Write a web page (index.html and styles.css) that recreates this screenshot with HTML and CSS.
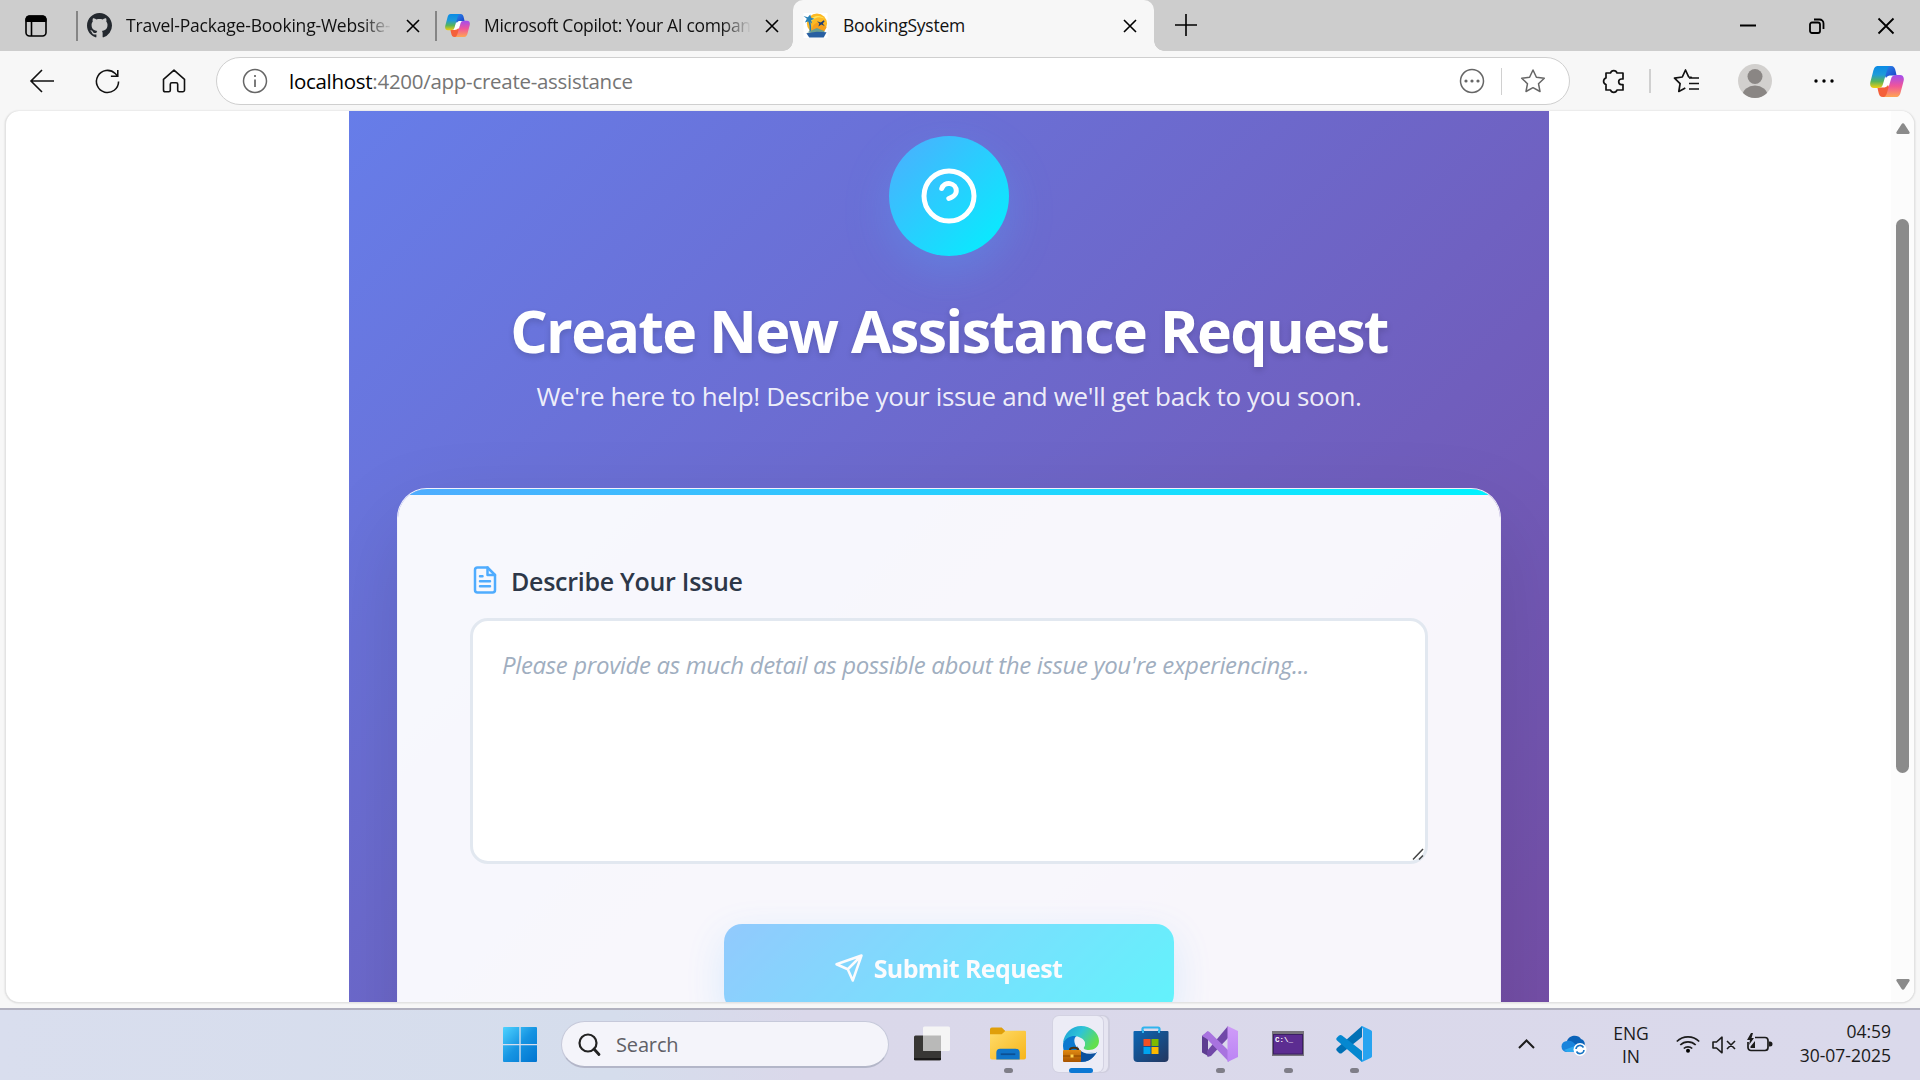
FILE: index.html
```
<!DOCTYPE html>
<html lang="en">
<head>
<meta charset="utf-8">
<title>BookingSystem</title>
<link rel="stylesheet" href="styles.css">
</head>
<body>
<svg class="defs" width="0" height="0" aria-hidden="true">
  <defs>
    <linearGradient id="cpBlue" x1="0" y1="0" x2="0" y2="1"><stop offset="0" stop-color="#0a8be6"/><stop offset=".4" stop-color="#1f9bd8"/><stop offset=".7" stop-color="#58b45a"/><stop offset="1" stop-color="#f5cf0c"/></linearGradient>
    <linearGradient id="cpPink" x1="0" y1="0" x2="0" y2="1"><stop offset="0" stop-color="#a14df0"/><stop offset=".5" stop-color="#f0559a"/><stop offset="1" stop-color="#ffa552"/></linearGradient>
    <linearGradient id="cpNavy" x1="0" y1="0" x2="1" y2="1"><stop offset="0" stop-color="#2a8aee"/><stop offset="1" stop-color="#1b3fc4"/></linearGradient>
    <linearGradient id="win" x1="0" y1="0" x2="1" y2="1"><stop offset="0" stop-color="#4fd3ff"/><stop offset=".5" stop-color="#1694e2"/><stop offset="1" stop-color="#0074d0"/></linearGradient>
    <linearGradient id="fold" x1="0" y1="0" x2="1" y2="1"><stop offset="0" stop-color="#ffdc6a"/><stop offset="1" stop-color="#f7b51a"/></linearGradient>
    <linearGradient id="edgeTop" x1="0" y1="0" x2="1" y2=".5"><stop offset="0" stop-color="#1a9bd8"/><stop offset=".5" stop-color="#2fc4d6"/><stop offset="1" stop-color="#62df4e"/></linearGradient>
    <linearGradient id="case" x1="0" y1="0" x2="0" y2="1"><stop offset="0" stop-color="#e08a12"/><stop offset="1" stop-color="#a85400"/></linearGradient>
    <linearGradient id="store" x1="0" y1="0" x2="1" y2="1"><stop offset="0" stop-color="#0b66b4"/><stop offset="1" stop-color="#24365f"/></linearGradient>
    <linearGradient id="vsr" x1="0" y1="0" x2="0" y2="1"><stop offset="0" stop-color="#cf9cf8"/><stop offset="1" stop-color="#bb84f4"/></linearGradient>
    <symbol id="copilot" viewBox="0 0 34 31">
      <path d="M15.500 9.500h7l-4 12h-7z" fill="#fff"/>
      <path d="M15 0h6c3 0 4 2 4.600 5l1 4.500H21c-2 0-4 .5-5 2.500l-2-4z" fill="url(#cpNavy)"/>
      <path d="M19 31h-6c-3 0-4-2-4.600-5l-1-4.500H13c2 0 4-.5 5-2.500l2 4z" fill="#f4603a"/>
      <path d="M8 0h12c-2 1-2.500 2.500-3.200 5L13 18c-.8 3-2.500 4-5.500 4H4c-3 0-4.500-2.500-3.600-6L3 6c1-4 2-6 5-6z" fill="url(#cpBlue)"/>
      <path d="M26 31H14c2-1 2.500-2.500 3.200-5L21 13c.8-3 2.500-4 5.500-4H30c3 0 4.500 2.500 3.600 6L31 25c-1 4-2 6-5 6z" fill="url(#cpPink)"/>
    </symbol>
    <symbol id="close" viewBox="0 0 14 14"><path d="M1 1l12 12M13 1L1 13" fill="none" stroke="#000" stroke-width="1.6"/></symbol>
  </defs>
</svg>

<header class="tabstrip">
  <svg class="tab-actions" viewBox="0 0 22 22"><rect x="1" y="1" width="20" height="20" rx="3.5" fill="none" stroke="#000" stroke-width="1.6"/><path d="M1 6.500V4a3 3 0 0 1 3-3h14a3 3 0 0 1 3 3v2.500z" stroke="#000"/><path d="M6.500 6v15" stroke="#000" stroke-width="1.600"/></svg>
  <span class="tab-divider first"></span>
  <div class="tab one">
    <svg class="fav" viewBox="0 0 16 16"><path fill="#24292f" d="M8 0C3.580 0 0 3.580 0 8c0 3.540 2.290 6.530 5.470 7.590.4.070.55-.17.55-.38 0-.19-.01-.82-.01-1.490-2.010.37-2.530-.49-2.690-.94-.09-.23-.48-.94-.82-1.130-.28-.15-.68-.52-.01-.53.63-.01 1.080.58 1.230.82.72 1.210 1.870.87 2.330.66.07-.52.28-.87.51-1.070-1.780-.2-3.640-.89-3.640-3.950 0-.87.31-1.590.82-2.150-.08-.2-.36-1.020.08-2.120 0 0 .67-.21 2.200.82.64-.18 1.320-.27 2-.27s1.360.09 2 .27c1.530-1.040 2.200-.82 2.200-.82.44 1.100.16 1.920.08 2.120.51.56.82 1.270.82 2.150 0 3.070-1.870 3.750-3.650 3.950.29.25.54.73.54 1.480 0 1.070-.01 1.930-.01 2.200 0 .21.15.46.55.38A8.010 8.010 0 0 0 16 8c0-4.420-3.580-8-8-8z"/></svg>
    <span class="tab-title fade">Travel-Package-Booking-Website-</span>
    <svg class="x"><use href="#close"/></svg>
  </div>
  <span class="tab-divider"></span>
  <div class="tab two">
    <svg class="fav"><use href="#copilot"/></svg>
    <span class="tab-title fade">Microsoft Copilot: Your AI compan</span>
    <svg class="x"><use href="#close"/></svg>
  </div>
  <div class="tab active">
    <svg class="fav" viewBox="0 0 25 26"><rect width="25" height="26" fill="#fff"/><circle cx="14" cy="11" r="10.500" fill="#fdb924"/><path d="M7 7c4-5 11-5 15-1-5-3-10-2-14 3z" fill="#ffe65c"/><path d="M8 19c1-7 6-11 12-9l4 5-3 5z" fill="#f6a01c"/><path d="M5.500 8c2 4 2 7 1.500 12" stroke="#2a78b0" stroke-width="1.600" fill="none"/><path d="M0 3l4.500 1.500L7 1.500 8 5l3.500 1-3.500 1.500 1 3.500-3.500-2.500L1.500 10l2-4z" fill="#2a82b8"/><path d="M14 8.500l4 1.500 3-2.500 1 1-2 2.500 2 2.500-3.500-1.500-3 2 1-3z" fill="#1c3f78"/><path d="M4 20l10-4.500L22 19l-2 4z" fill="#6a9d8f"/><path d="M3 21l11-1.500 10 .5-3 5.500H6z" fill="#285fa2"/></svg>
    <span class="tab-title">BookingSystem</span>
    <svg class="x"><use href="#close"/></svg>
  </div>
  <svg class="plus" viewBox="0 0 22 22"><path d="M11 0v22M0 11h22" stroke="#000" stroke-width="1.600"/></svg>
  <div class="window-controls">
    <svg viewBox="0 0 16 16"><path d="M0 7.500h16" stroke="#000" stroke-width="2"/></svg>
    <svg viewBox="0 0 16 16"><rect x="1" y="4.500" width="10" height="10.500" rx="2" fill="none" stroke="#000" stroke-width="1.800"/><path d="M5 1.500h5.500a4 4 0 0 1 4 4V11" fill="none" stroke="#000" stroke-width="1.800"/></svg>
    <svg viewBox="0 0 16 16"><path d="M.5.5l15 15M15.500.5l-15 15" stroke="#000" stroke-width="1.800"/></svg>
  </div>
</header>

<nav class="toolbar">
  <svg class="back" viewBox="0 0 24 24"><path d="M24 12H1M12 1L1 12l11 11" fill="none" stroke="#111" stroke-width="1.600"/></svg>
  <svg class="reload" viewBox="0 0 26 26"><path d="M24.500 13A11.500 11.500 0 1 1 21 4.700l2.500 2.500M23.700 1v6.500H16.500" fill="none" stroke="#111" stroke-width="1.600"/></svg>
  <svg class="home" viewBox="0 0 24 24"><path d="M1.500 10.300L12 1.200l10.500 9.100V21a1.800 1.800 0 0 1-1.800 1.800h-3.500a1.500 1.500 0 0 1-1.500-1.500v-6a1.500 1.500 0 0 0-1.500-1.500h-4.400a1.500 1.500 0 0 0-1.500 1.500v6a1.500 1.500 0 0 1-1.500 1.500H3.300A1.800 1.800 0 0 1 1.500 21z" fill="none" stroke="#111" stroke-width="1.600" stroke-linejoin="round"/></svg>
  <div class="address">
    <svg class="info" viewBox="0 0 26 26"><circle cx="13" cy="13" r="11.500" fill="none" stroke="#666" stroke-width="1.500"/><path d="M13 11.500V19M13 7v2" stroke="#666" stroke-width="1.700"/></svg>
    <span class="url"><b>localhost</b>:4200/app-create-assistance</span>
    <svg class="more" viewBox="0 0 26 26"><circle cx="13" cy="13" r="11.500" fill="none" stroke="#666" stroke-width="1.500"/><g fill="#666"><circle cx="7" cy="13" r="1.600"/><circle cx="13" cy="13" r="1.600"/><circle cx="19" cy="13" r="1.600"/></g></svg>
    <span class="bar-divider"></span>
    <svg class="star" viewBox="0 0 26 26"><path d="M13 2l3.400 7.200 7.900 1-5.800 5.500 1.500 7.800-7-3.800-7 3.800 1.500-7.800L1.700 10.200l7.900-1z" fill="none" stroke="#666" stroke-width="1.500" stroke-linejoin="round"/></svg>
  </div>
  <svg class="puzzle" viewBox="0 0 24 26"><path d="M5 5h4.500a3.400 3.400 0 0 1 6.500 0H22v6h-1.500a2.800 2.800 0 0 0 0 5.600H22V22h-6a3.400 3.400 0 0 1-6.500 0H5v-5.500a3.400 3.400 0 0 1 0-6.500z" fill="none" stroke="#111" stroke-width="1.700" stroke-linejoin="round"/></svg>
  <span class="bar-divider outer"></span>
  <svg class="favorites" viewBox="0 0 26 26"><path d="M19 9.500l-3.300-.5L12.500 2 9.300 9l-7.800 1.200 5.600 5.400L5.800 23.500l6.500-3.500M16 10h10M16 15.500h10M16 21h10" fill="none" stroke="#111" stroke-width="1.700" stroke-linejoin="round"/></svg>
  <svg class="avatar" viewBox="0 0 34 34"><clipPath id="av"><circle cx="17" cy="17" r="17"/></clipPath><g clip-path="url(#av)"><rect width="34" height="34" fill="#d2d0ce"/><circle cx="17" cy="12.500" r="7.500" fill="#8a8684"/><ellipse cx="17" cy="31.500" rx="12.500" ry="10" fill="#8a8684"/></g></svg>
  <svg class="dots" viewBox="0 0 22 6"><circle cx="3" cy="3" r="1.700"/><circle cx="11" cy="3" r="1.700"/><circle cx="19" cy="3" r="1.700"/></svg>
  <svg class="copilot-btn"><use href="#copilot"/></svg>
</nav>

<div class="frame">
  <main class="viewport">
    <section class="page">
      <div class="badge"><svg viewBox="0 0 24 24"><circle cx="12" cy="12" r="10"/><path d="M9.090 9a3 3 0 0 1 5.830 1c0 2-3 3-3 3"/></svg></div>
      <h1>Create New Assistance Request</h1>
      <p class="sub">We're here to help! Describe your issue and we'll get back to you soon.</p>
      <form class="card">
        <div class="card-bar"></div>
        <label class="label" for="issue">
          <svg viewBox="0 0 24 24"><path d="M14 2H6a2 2 0 0 0-2 2v16a2 2 0 0 0 2 2h12a2 2 0 0 0 2-2V8z"/><path d="M14 2v6h6M16 13H8M16 17H8M10 9H8"/></svg>
          <span>Describe Your Issue</span>
        </label>
        <div class="field">
          <textarea id="issue" placeholder="Please provide as much detail as possible about the issue you're experiencing..."></textarea>
          <svg class="grip" viewBox="0 0 12 12"><path d="M1 11.500L11 1M7 11.500l4-4" stroke="#444" stroke-width="1.500"/></svg>
        </div>
        <button class="submit" type="button">
          <svg viewBox="0 0 24 24"><path d="M22 2L11 13M22 2l-7 20-4-9-9-4z"/></svg>
          <span>Submit Request</span>
        </button>
      </form>
    </section>
    <aside class="scroll">
      <svg class="arrow" viewBox="0 0 14 11"><path d="M5.500 1.200a1.700 1.700 0 0 1 3 0L13.500 9a1.300 1.300 0 0 1-1 2h-11a1.300 1.300 0 0 1-1-2z"/></svg>
      <div class="thumb"></div>
      <svg class="arrow down" viewBox="0 0 14 11"><path d="M5.500 1.200a1.700 1.700 0 0 1 3 0L13.500 9a1.300 1.300 0 0 1-1 2h-11a1.300 1.300 0 0 1-1-2z"/></svg>
    </aside>
  </main>
</div>

<footer class="taskbar">
  <svg class="start" viewBox="0 0 34 35"><path fill="url(#win)" d="M0 1a1 1 0 0 1 1-1h15.300v17H0zM17.700 0H33a1 1 0 0 1 1 1v16H17.700zM0 18.300h16.300V35H1a1 1 0 0 1-1-1zM17.700 18.300H34V34a1 1 0 0 1-1 1H17.700z"/></svg>
  <div class="search">
    <svg viewBox="0 0 22 23"><circle cx="10" cy="10" r="8.500" fill="none" stroke="#222" stroke-width="2.200"/><path d="M16 16l5 5.500" stroke="#222" stroke-width="2.800" stroke-linecap="round"/></svg>
    <span>Search</span>
  </div>
  <div class="app taskview"><svg viewBox="0 0 36 35"><rect y="9" width="27" height="25" rx="1.500" fill="#383735"/><path d="M0 32.500h27" stroke="#111" stroke-width="1.500"/><rect x="9" width="27" height="24.500" rx="1.500" fill="#f5f5f5"/><path d="M9 9h18v15.500H10.500A1.500 1.500 0 0 1 9 23z" fill="#b9b9b8"/></svg></div>
  <div class="app explorer"><svg viewBox="0 0 37 36"><path d="M0 3a2 2 0 0 1 2-2h10l4 4h19a2 2 0 0 1 2 2v6H0z" fill="#e09f0a"/><path d="M0 8h12l4-3.500h19.500A1.500 1.500 0 0 1 37 6v26a2 2 0 0 1-2 2H2a2 2 0 0 1-2-2z" fill="url(#fold)"/><path d="M6.500 34V27a4 4 0 0 1 4-4h16a4 4 0 0 1 4 4v7z" fill="#0f74c8"/><path d="M11 28.500h15" stroke="#0b4f93" stroke-width="1.800"/></svg></div>
  <div class="app edge current"><svg viewBox="0 0 36 36"><path d="M0 20C0 10 9 5 16 9c-5 1-6 6-3 11 3 6 10 8 21 6-4 7-10 10-16 10C8 36 0 29 0 20z" fill="#0c78cf"/><path d="M14 19c3 8 10 10 19.500 7C30 33 25 36 17 36z" fill="#0d519f"/><path d="M0 17C1 7 9 0 18 0c10 0 18 7 18 15 0 6-5 9-10 9-4 0-6-1-5-3 2-3 1-7-3-9C12 8 4 10 0 17z" fill="url(#edgeTop)"/><circle cx="18" cy="18" r="4" fill="#ececf6"/><path d="M17 20c3 6 10 8 17 5l-1 2c-8 2-14 0-17-4z" fill="#ececf6"/><path d="M7 24c0-3 8-3 8 0" stroke="#4a3010" stroke-width="2" fill="none"/><rect y="24" width="18" height="12" rx="1" fill="url(#case)"/><path d="M0 30h18" stroke="#8a4700"/><rect x="7.500" y="28.500" width="3" height="3" fill="#ffd24c"/></svg></div>
  <div class="app msstore idle"><svg viewBox="0 0 35 36"><path d="M9 8V3a1.500 1.500 0 0 1 1.500-1.500h14A1.500 1.500 0 0 1 26 3v5" fill="none" stroke="#30b4ee" stroke-width="2.200"/><path d="M0 6a1 1 0 0 1 1-1h33a1 1 0 0 1 1 1v26a4 4 0 0 1-4 4H4a4 4 0 0 1-4-4z" fill="url(#store)"/><path d="M9.500 4v3M25.500 4v3" stroke="#30b4ee" stroke-width="2"/><path fill="#f25022" d="M10 13h7v7h-7z"/><path fill="#7fba00" d="M18 13h7v7h-7z"/><path fill="#00a4ef" d="M10 21h7v7h-7z"/><path fill="#ffb900" d="M18 21h7v7h-7z"/></svg></div>
  <div class="app vs"><svg viewBox="0 0 36 36"><path d="M0 10l6-4.500V30L0 26.500z" fill="#5d3d91"/><path d="M5 25L26 0v12L9 30l-3.500 1z" fill="#7148a8"/><path d="M0 10l5-4.500c1-.5 2 0 3 1L27 25v11L5 13z" fill="#a873df"/><path d="M25.500 0L36 5v26l-10.500 5z" fill="url(#vsr)"/></svg></div>
  <div class="app cmd"><svg viewBox="0 0 32 25"><rect width="32" height="25" fill="#77747c"/><rect x="1.500" y="3.500" width="29" height="19.500" fill="#5c2d91" stroke="#3b1f63"/><text x="3" y="10.500" class="prompt">C:\_</text></svg></div>
  <div class="app code"><svg viewBox="0 0 36 36"><path d="M26 0v11L6 27c-1 .8-2 .6-3 0l-2-2c-1-1-1-2 0-3z" fill="#0070b5"/><path d="M26 36V25L6 9.500c-1-.8-2-.6-3 0l-2 2c-1 1-1 2 0 3z" fill="#0588d0"/><path d="M25 .5c.5-.5 1-.5 1.500-.3L34.500 4c1 .5 1.500 1 1.500 2v24c0 1-.5 1.500-1.500 2l-8 3.800c-.5.200-1 .2-1.500-.3l2-2.500V3z" fill="#27a3f0"/></svg></div>
  <div class="tray">
    <svg class="chev" viewBox="0 0 17 10"><path d="M1 9l7.500-7.500L16 9" fill="none" stroke="#1b1b1b" stroke-width="2"/></svg>
    <svg class="drive" viewBox="0 0 25 21"><path d="M5 6C7 0 16-1 19 4c3 1 5 4 3 8H5z" fill="#0a62b8"/><path d="M5 17a5.500 5.500 0 0 1 0-11c4-1 6 1 8 3l9 4v4z" fill="#1a84dc"/><path d="M2 15l11-4 6 6H5z" fill="#2ba7ee"/><circle cx="18" cy="14.500" r="6.500" fill="#fff"/><path d="M14 14a4 4 0 0 1 7.500-1.500M22 15a4 4 0 0 1-7.500 1.500" fill="none" stroke="#1673c4" stroke-width="1.600"/></svg>
    <div class="lang"><span>ENG</span><span>IN</span></div>
    <svg class="wifi" viewBox="0 0 24 18"><g fill="none" stroke="#1b1b1b" stroke-width="1.700"><path d="M.8 6.500a16 16 0 0 1 22.400 0M4.300 10a11 11 0 0 1 15.400 0M7.800 13.500a6 6 0 0 1 8.400 0"/></g><circle cx="12" cy="15.700" r="2"/></svg>
    <svg class="mute" viewBox="0 0 24 18"><path d="M1 6h3.500L10 1.200v15.600L4.500 12H1zM15 5l8 8M23 5l-8 8" fill="none" stroke="#1b1b1b" stroke-width="1.600" stroke-linejoin="round"/></svg>
    <svg class="battery" viewBox="0 0 25 19"><path d="M8 4.500h10a3 3 0 0 1 3 3v7a3 3 0 0 1-3 3H4a3 3 0 0 1-3-3V9" fill="none" stroke="#1b1b1b" stroke-width="1.700"/><path d="M22 8.500h1a2 2 0 0 1 0 5h-1zM4 0L0 7h3l-1 5 5-7H4.500L6 0zM3.500 15v-1.500L8 8v7z" fill="#1b1b1b"/></svg>
    <div class="clock"><span>04:59</span><span>30-07-2025</span></div>
  </div>
</footer>
</body>
</html>
```
FILE: styles.css
```
* { box-sizing: border-box; }
body { margin: 0; width: 1920px; height: 1080px; overflow: hidden; display: flex; flex-direction: column; background: #f7f7f7; font-family: "Open Sans", "Noto Sans", sans-serif; color: #111; }
svg { display: block; flex: none; overflow: visible; }
span { white-space: nowrap; }
.defs { position: absolute; }

/* tab strip */
.tabstrip { height: 51px; flex: none; background: #cdcdcd; display: flex; align-items: center; }
.tab-actions { width: 22px; height: 22px; margin-left: 25px; }
.tab-divider { width: 2px; height: 30px; background: #858585; flex: none; }
.tab-divider.first { margin-left: 29px; }
.tab { height: 51px; display: flex; align-items: center; font-size: 17.500px; letter-spacing: -.2px; flex: none; }
.fav { width: 25px; height: 25px; }
.tab-title { flex: 1; overflow: hidden; line-height: 30px; margin-top: -1px; }
.fade { -webkit-mask-image: linear-gradient(90deg, #000 calc(100% - 30px), transparent); mask-image: linear-gradient(90deg, #000 calc(100% - 30px), transparent); }
.x { width: 14px; height: 14px; margin-top: 1px; }
.tab.one { width: 357px; padding: 0 15px 0 9px; gap: 14px; }
.tab.two { width: 356px; padding: 0 14px 0 8px; gap: 14px; letter-spacing: -.35px; }
.tab.active { width: 361px; padding: 0 17px 0 10px; gap: 15px; background: #f7f7f7; border-radius: 10px 10px 0 0; position: relative; letter-spacing: -.25px; }
.tab.active::before, .tab.active::after { content: ""; position: absolute; bottom: 0; width: 10px; height: 10px; }
.tab.active::before { left: -10px; background: radial-gradient(circle at 0 0, transparent 9.500px, #f7f7f7 10px); }
.tab.active::after { right: -10px; background: radial-gradient(circle at 100% 0, transparent 9.500px, #f7f7f7 10px); }
.plus { width: 22px; height: 22px; margin-left: 21px; margin-top: -2px; }
.window-controls { margin-left: auto; margin-right: 26px; display: flex; gap: 53px; }
.window-controls svg { width: 16px; height: 16px; }

/* toolbar */
.toolbar { height: 60px; flex: none; display: flex; align-items: center; }
.back { width: 24px; height: 24px; margin-left: 30px; }
.reload { width: 25px; height: 25px; margin-left: 41px; }
.home { width: 24px; height: 24px; margin-left: 42px; }
.address { width: 1354px; height: 48px; margin-left: 30px; padding: 0 23px 0 25px; border: 1.500px solid #cfcfcf; border-radius: 24px; background: #fff; display: flex; align-items: center; }
.info, .more, .star { width: 26px; height: 26px; }
.url { margin-left: 21px; font-size: 20.500px; letter-spacing: -.28px; color: #757575; }
.url b { font-weight: 400; color: #000; }
.more { margin-left: auto; }
.bar-divider { width: 1.500px; height: 27px; background: #d0d0d0; margin: 0 18px 0 16px; }
.puzzle { width: 24px; height: 26px; margin-left: 31px; }
.bar-divider.outer { height: 24px; margin: 0 22px 0 24px; }
.favorites { width: 26px; height: 26px; }
.avatar { width: 34px; height: 34px; margin-left: 39px; }
.dots { width: 22px; height: 6px; margin-left: 41px; }
.copilot-btn { width: 34px; height: 31px; margin-left: 35px; }

/* page frame */
.frame { height: 897px; flex: none; padding: 0 5px; }
.viewport { height: 892px; border: 1px solid #e3e3e3; border-width: 0 1px 1px; border-radius: 14px; overflow: hidden; background: #fff; display: flex; box-shadow: 0 0 2px #ccc; }
.page { width: 1200px; margin-left: 343px; height: 891px; overflow: hidden; padding: 25px 48px 0; background: linear-gradient(135deg, #667eea, #764ba2) 0 -40px / 100% 1090px no-repeat; display: flex; flex-direction: column; align-items: center; color: #fff; }
.badge { width: 120px; height: 120px; flex: none; border-radius: 50%; background: linear-gradient(135deg, #4facfe, #00f2fe); box-shadow: 0 15px 45px rgba(79, 172, 254, .3); display: flex; align-items: center; justify-content: center; }
.badge svg { width: 60px; height: 60px; fill: none; stroke: #fff; stroke-width: 2; stroke-linecap: round; stroke-linejoin: round; }
h1 { margin: 34px 0 0; font-size: 59px; line-height: 80px; font-weight: 700; letter-spacing: -1.680px; text-shadow: 0 3px 6px rgba(0, 0, 0, .15); white-space: nowrap; }
.sub { margin: 8px 0 74px; font-size: 26px; line-height: 36px; letter-spacing: -.37px; color: rgba(255, 255, 255, .9); white-space: nowrap; }
.card { width: 1104px; height: 760px; flex: none; border: 1px solid rgba(255, 255, 255, .9); border-radius: 30px; overflow: hidden; background: rgba(255, 255, 255, .95); background-clip: padding-box; box-shadow: 0 36px 90px rgba(0, 0, 0, .13); display: flex; flex-direction: column; align-items: center; }
.card-bar { width: 100%; height: 6px; background: linear-gradient(90deg, #4facfe, #00f2fe); }
.label { width: 958px; margin-top: 68px; height: 36px; display: flex; align-items: center; gap: 11px; color: #2d3748; font-size: 25px; line-height: 36px; font-weight: 600; letter-spacing: -.28px; }
.label svg { width: 30px; height: 30px; margin-top: -3px; fill: none; stroke: #4facfe; stroke-width: 2; stroke-linecap: round; stroke-linejoin: round; }
.field { width: 958px; height: 246px; margin-top: 19px; position: relative; }
textarea { display: block; width: 100%; height: 100%; resize: none; border: 3px solid #e2e8f0; border-radius: 18px; padding: 26px 10px 0 29px; background: #fff; font: 24px/36px "Open Sans", "Noto Sans", sans-serif; letter-spacing: -.34px; }
textarea::placeholder { color: #a0aec0; font-style: italic; opacity: 1; white-space: nowrap; }
.grip { position: absolute; right: 4px; bottom: 4px; width: 12px; height: 12px; }
.submit { width: 450px; height: 88px; margin-top: 60px; border: 0; border-radius: 18px; padding: 0 2px 0 0; background: linear-gradient(135deg, #4facfe, #00f2fe); opacity: .6; box-shadow: 0 12px 38px rgba(79, 172, 254, .3); display: flex; align-items: center; justify-content: center; gap: 10px; color: #fff; font: 700 25px/36px "Open Sans", sans-serif; letter-spacing: -.6px; }
.submit svg { width: 30px; height: 30px; fill: none; stroke: #fff; stroke-width: 2; stroke-linejoin: round; stroke-linecap: round; }
.scroll { width: 23px; margin-left: auto; background: #fcfcfc; display: flex; flex-direction: column; align-items: center; padding: 12px 0; }
.arrow { width: 14px; height: 11px; fill: #8b8b8b; }
.thumb { width: 13px; height: 554px; margin-top: 85px; border-radius: 7px; background: #8b8b8b; }
.arrow.down { transform: rotate(180deg); margin-top: auto; }

/* taskbar */
.taskbar { height: 72px; flex: none; border-top: 2px solid #b1b1bf; background: linear-gradient(90deg, #d9deee, #d5ddec 32%, #dad8ea 42%, #dad9eb); display: flex; align-items: flex-start; }
.start { width: 34px; height: 35px; margin: 17px 0 0 503px; }
.search { width: 328px; height: 47px; margin: 11px 0 0 24px; border: 1.500px solid #c6c9da; border-bottom: 2px solid #b3b6c8; border-radius: 24px; background: #f4f4fa; display: flex; align-items: center; padding-left: 16px; gap: 16px; font-size: 20px; letter-spacing: -.15px; color: #606066; }
.search svg { width: 22px; height: 23px; }
.app { position: relative; height: 70px; padding-top: 16px; }
.app svg { width: 36px; height: 36px; position: relative; }
.app::after { content: ""; position: absolute; left: 50%; margin-left: -4.500px; top: 58px; width: 9px; height: 5px; border-radius: 3px; background: #7f7e88; }
.app.idle::after, .app.taskview::after { display: none; }
.taskview { margin-left: 25px; }
.explorer { margin-left: 40px; }
.edge { margin: 6px 0 0 27px; width: 50px; height: 56px; padding: 10px 0 0 10px; border-radius: 6px; background: #ececf6; box-shadow: 0 0 0 1px #d3d2e2, 5px 0 0 #e6e5f1, 6px 0 0 1px #cfcede; }
.edge.current::after { width: 24px; margin-left: -9px; top: 52px; background: #0c78d4; }
.msstore { margin-left: 30px; }
.vs { margin-left: 33px; }
.cmd { margin-left: 34px; padding-top: 21px; }
.app.cmd svg { width: 32px; height: 25px; }
.prompt { font: bold 7.500px "Liberation Mono", monospace; fill: #fff; }
.code { margin-left: 32px; }
.tray { margin-left: auto; margin-right: 29px; height: 70px; display: flex; align-items: center; font-size: 17.500px; letter-spacing: -.1px; color: #1b1b1b; }
.chev { width: 17px; height: 10px; margin-top: -2px; }
.drive { width: 25px; height: 21px; margin-left: 27px; }
.lang, .clock { display: flex; flex-direction: column; line-height: 24px; }
.lang { width: 34px; align-items: center; margin-left: 27px; line-height: 23px; }
.wifi { width: 24px; height: 18px; margin-left: 28px; margin-top: -2px; }
.mute { width: 24px; height: 18px; margin-left: 12px; margin-top: -1px; }
.battery { width: 25px; height: 19px; margin-left: 11px; margin-top: -5px; }
.clock { width: 93px; align-items: flex-end; margin-left: 26px; margin-bottom: 4px; letter-spacing: 0; }
```
